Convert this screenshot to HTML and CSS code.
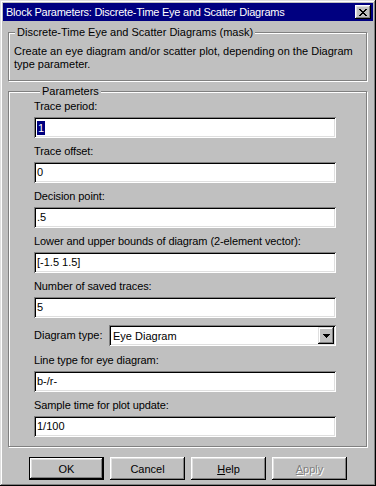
FILE: index.html
```html
<!DOCTYPE html>
<html lang="en">

<head>
    <meta charset="UTF-8">
    <meta name="viewport" content="width=device-width, initial-scale=1.0">
    <title>Block Parameters</title>
    <link rel="stylesheet" href="styles.css">
</head>

<body>
    <div class="window">
        <div class="titlebar">
            <span class="title">Block Parameters: Discrete-Time Eye and Scatter Diagrams</span>
            <button class="close-btn" type="button">
                <svg width="8" height="7" viewBox="0 0 8 7" shape-rendering="crispEdges">
                    <path d="M0 0h2v1H0z M6 0h2v1H6z M1 1h2v1H1z M5 1h2v1H5z M2 2h4v1H2z M3 3h2v1H3z M2 4h4v1H2z M1 5h2v1H1z M5 5h2v1H5z M0 6h2v1H0z M6 6h2v1H6z" fill="#000"/>
                </svg>
            </button>
        </div>

        <div class="dialog">
            <fieldset class="group">
                <legend>Discrete-Time Eye and Scatter Diagrams (mask)</legend>
                <p class="desc">Create an eye diagram and/or scatter plot, depending on the Diagram<br>type parameter.</p>
            </fieldset>

            <fieldset class="group params">
                <legend>Parameters</legend>

                <div class="label">Trace period:</div>
                <div class="field"><span class="selected">1</span></div>

                <div class="label">Trace offset:</div>
                <div class="field">0</div>

                <div class="label">Decision point:</div>
                <div class="field">.5</div>

                <div class="label">Lower and upper bounds of diagram (2-element vector):</div>
                <div class="field">[-1.5 1.5]</div>

                <div class="label">Number of saved traces:</div>
                <div class="field">5</div>

                <div class="select-row">
                    <span class="select-label">Diagram type:</span>
                    <div class="select">
                        <span class="select-value">Eye Diagram</span>
                        <span class="select-btn">
                            <svg width="7" height="4" viewBox="0 0 7 4" shape-rendering="crispEdges">
                                <path d="M0 0h7v1H0z M1 1h5v1H1z M2 2h3v1H2z M3 3h1v1H3z" fill="#000"/>
                            </svg>
                        </span>
                    </div>
                </div>

                <div class="label">Line type for eye diagram:</div>
                <div class="field">b-/r-</div>

                <div class="label">Sample time for plot update:</div>
                <div class="field last">1/100</div>
            </fieldset>

            <div class="buttons">
                <button class="btn default" type="button">OK</button>
                <button class="btn" type="button">Cancel</button>
                <button class="btn" type="button"><u>H</u>elp</button>
                <button class="btn" type="button" disabled><u>A</u>pply</button>
            </div>
        </div>
    </div>
</body>

</html>
```

FILE: styles.css
```css
body {
    margin: 0;
    padding: 0;
    background-color: #c0c0c0;
    font-family: "Liberation Sans", Arial, sans-serif;
    font-size: 11px;
    color: #000;
}

.window {
    width: 376px;
    height: 486px;
    box-sizing: border-box;
    padding: 3px;
    background-color: #c0c0c0;
    box-shadow: inset -1px -1px #000, inset 1px 1px #dfdfdf,
        inset -2px -2px #808080, inset 2px 2px #fff;
}

.titlebar {
    height: 18px;
    background-color: #000080;
    display: flex;
    align-items: center;
    justify-content: space-between;
    padding-left: 3px;
}

.title {
    color: #fff;
    line-height: 13px;
    letter-spacing: -0.25px;
    white-space: nowrap;
}

.close-btn {
    width: 16px;
    height: 14px;
    margin-right: 2px;
    padding: 0;
    border: none;
    background-color: #c0c0c0;
    display: flex;
    align-items: center;
    justify-content: center;
    box-shadow: inset -1px -1px #000, inset 1px 1px #fff,
        inset -2px -2px #808080, inset 2px 2px #dfdfdf;
}

.close-btn svg {
    display: block;
    margin: 0 0 0 -1px;
}

.dialog {
    padding: 5px 5px 0 5px;
}

.group {
    margin: 0 1px 0 0;
    padding: 0;
    border: 1px solid #808080;
    min-inline-size: 0;
    box-shadow: inset 1px 1px 0 #fff, 1px 1px 0 #fff;
}

.group legend {
    margin-left: 6px;
    padding: 0 2px;
    line-height: 13px;
    background-color: #c0c0c0;
}

.desc {
    margin: 0;
    padding: 6px 0 9px 5px;
    line-height: 13px;
    white-space: nowrap;
}

.params {
    margin-top: 4px;
    padding: 2px 0 9px 25px;
}

.label {
    line-height: 13px;
    margin-bottom: 4px;
    letter-spacing: -0.1px;
    white-space: nowrap;
}

.field {
    width: 302px;
    height: 21px;
    box-sizing: border-box;
    padding: 4px 3px 0 3px;
    margin-bottom: 7px;
    background-color: #fff;
    line-height: 13px;
    white-space: nowrap;
    box-shadow: inset 1px 1px #808080, inset -1px -1px #fff,
        inset 2px 2px #000, inset -2px -2px #dfdfdf;
}

.field.last {
    margin-bottom: 0;
}

.selected {
    background-color: #000080;
    color: #fff;
    padding: 1px 1px 0 1px;
    display: inline-block;
}

.select-row {
    display: flex;
    align-items: center;
    margin-bottom: 8px;
}

.select-label {
    width: 75px;
    line-height: 13px;
}

.select {
    width: 227px;
    height: 21px;
    box-sizing: border-box;
    padding: 2px;
    background-color: #fff;
    display: flex;
    align-items: center;
    justify-content: space-between;
    box-shadow: inset 1px 1px #808080, inset -1px -1px #fff,
        inset 2px 2px #000, inset -2px -2px #dfdfdf;
}

.select-value {
    padding: 1px 0 0 2px;
    line-height: 13px;
}

.select-btn {
    width: 16px;
    height: 17px;
    background-color: #c0c0c0;
    display: flex;
    align-items: center;
    justify-content: center;
    box-shadow: inset -1px -1px #000, inset 1px 1px #dfdfdf,
        inset -2px -2px #808080, inset 2px 2px #fff;
}

.buttons {
    display: flex;
    gap: 6px;
    padding-left: 21px;
    margin-top: 10px;
}

.btn {
    width: 75px;
    height: 23px;
    padding: 0;
    border: none;
    background-color: #c0c0c0;
    font-family: "Liberation Sans", Arial, sans-serif;
    font-size: 11px;
    color: #000;
    box-shadow: inset -1px -1px #000, inset 1px 1px #fff,
        inset -2px -2px #808080, inset 2px 2px #dfdfdf;
}

.btn.default {
    box-shadow: inset 0 0 0 1px #000, inset -2px -2px #000, inset 2px 2px #fff,
        inset -3px -3px #808080, inset 3px 3px #dfdfdf;
}

.btn:disabled {
    color: #808080;
    text-shadow: 1px 1px 0 #fff;
}
```
